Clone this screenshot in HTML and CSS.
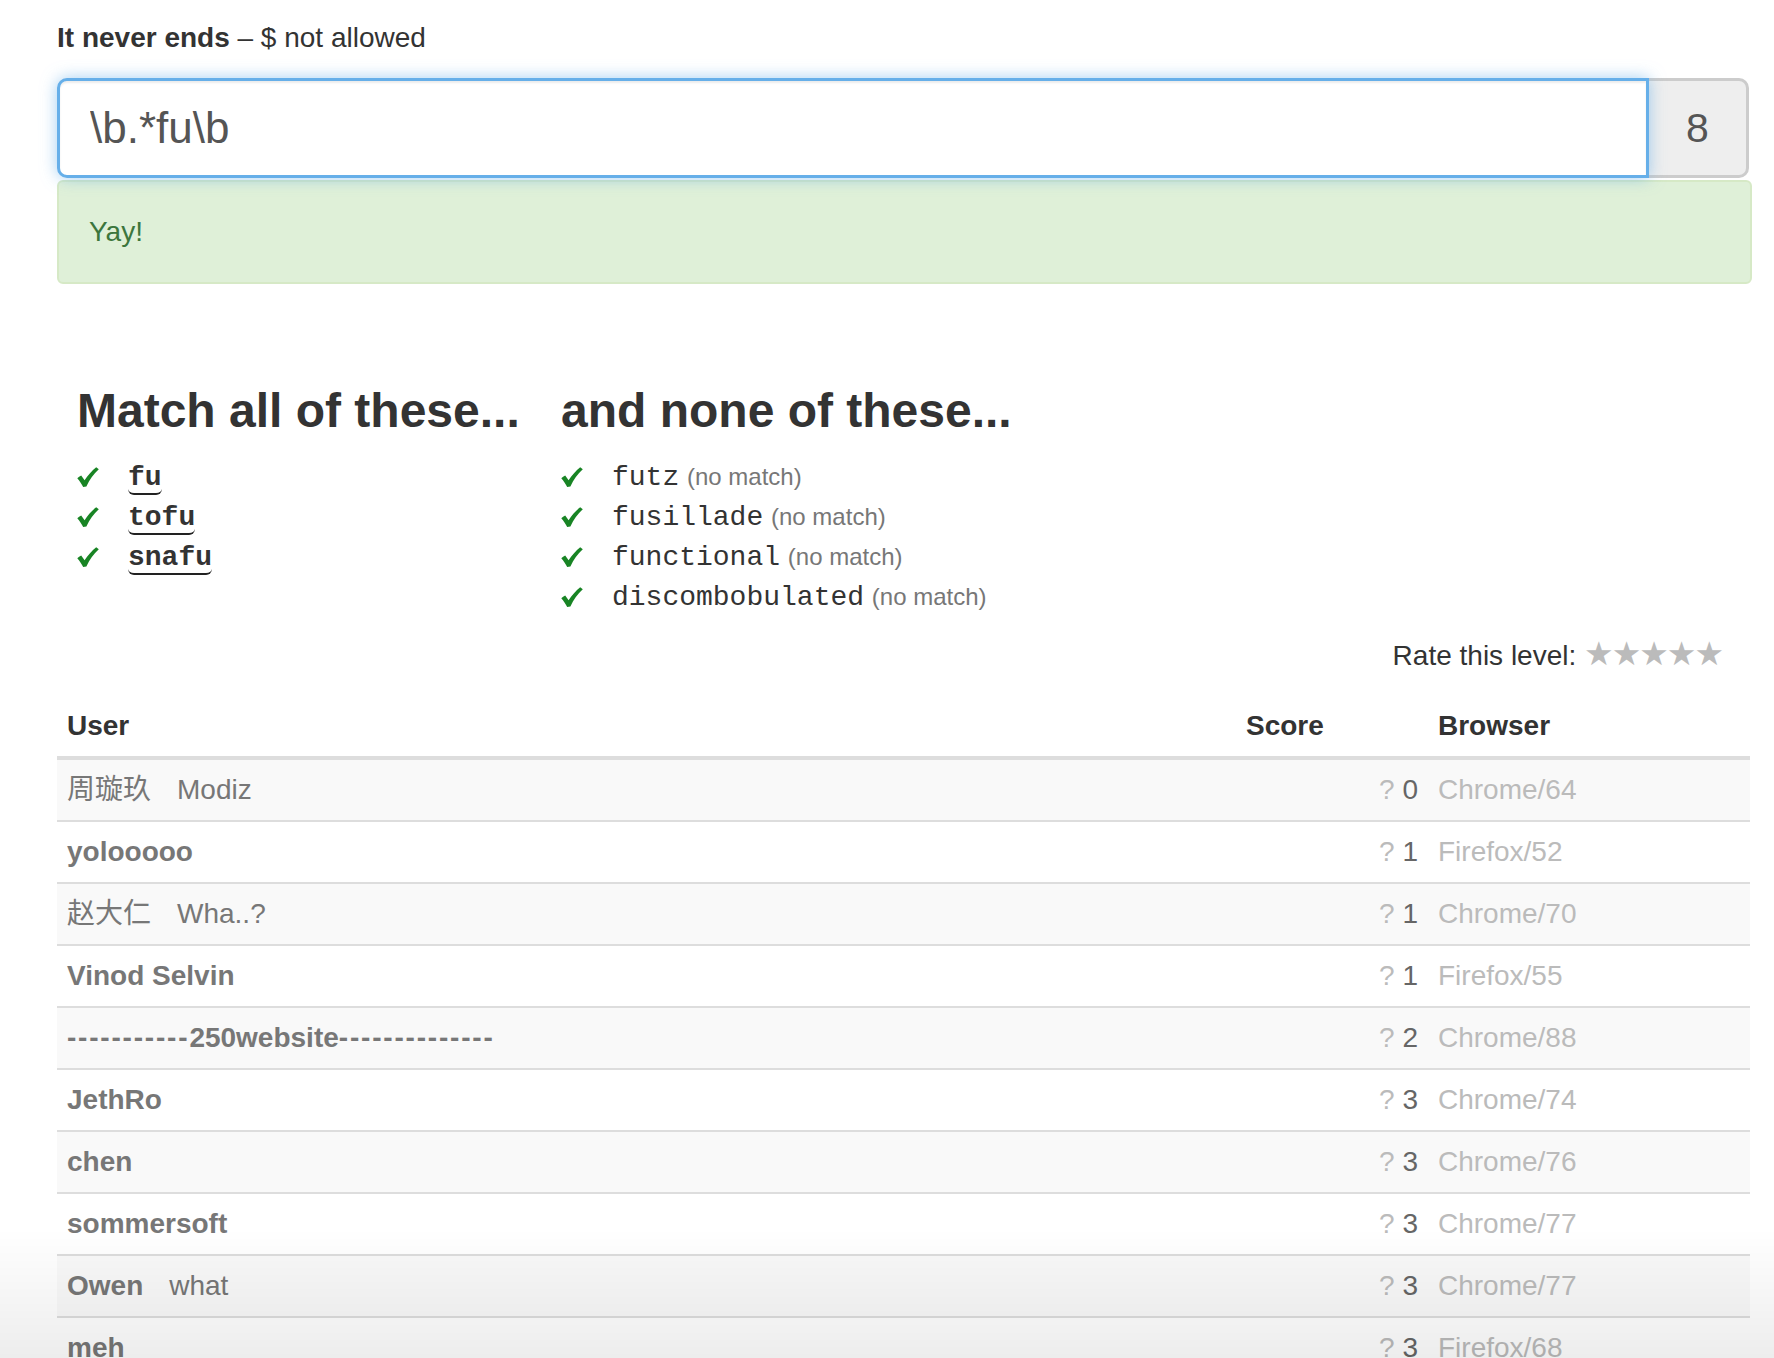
FILE: index.html
```html
<!DOCTYPE html>
<html lang="en">
<head>
<meta charset="utf-8">
<title>Regex Crossword – It never ends</title>
<link rel="stylesheet" href="styles.css">
</head>
<body>
<div class="page">
  <form class="entry">
    <label class="prompt"><strong>It never ends</strong> – $ not allowed</label>
    <div class="input-group">
      <input class="regex" type="text" value="\b.*fu\b">
      <span class="addon">8</span>
    </div>
    <div class="alert">Yay!</div>
  </form>

  <div class="tests">
    <div class="col col-match">
      <h3>Match all of these...</h3>
      <ul class="cases">
        <li><svg class="check" viewBox="0 0 22 20" width="22" height="20"><path d="M0.3 11.2 C1.4 10.2 2.7 9.2 4.2 8.6 L7.6 13.2 C11 8.2 14.8 3.6 19.2 0.2 L21.8 2.2 C16.6 6.8 12.6 12.6 9.4 19.4 L6.2 19.9 C4.6 16.8 2.6 13.8 0.3 11.2 Z"/></svg><span class="word hit">fu</span></li>
        <li><svg class="check" viewBox="0 0 22 20" width="22" height="20"><path d="M0.3 11.2 C1.4 10.2 2.7 9.2 4.2 8.6 L7.6 13.2 C11 8.2 14.8 3.6 19.2 0.2 L21.8 2.2 C16.6 6.8 12.6 12.6 9.4 19.4 L6.2 19.9 C4.6 16.8 2.6 13.8 0.3 11.2 Z"/></svg><span class="word hit">tofu</span></li>
        <li><svg class="check" viewBox="0 0 22 20" width="22" height="20"><path d="M0.3 11.2 C1.4 10.2 2.7 9.2 4.2 8.6 L7.6 13.2 C11 8.2 14.8 3.6 19.2 0.2 L21.8 2.2 C16.6 6.8 12.6 12.6 9.4 19.4 L6.2 19.9 C4.6 16.8 2.6 13.8 0.3 11.2 Z"/></svg><span class="word hit">snafu</span></li>
      </ul>
    </div>
    <div class="col col-none">
      <h3>and none of these...</h3>
      <ul class="cases">
        <li><svg class="check" viewBox="0 0 22 20" width="22" height="20"><path d="M0.3 11.2 C1.4 10.2 2.7 9.2 4.2 8.6 L7.6 13.2 C11 8.2 14.8 3.6 19.2 0.2 L21.8 2.2 C16.6 6.8 12.6 12.6 9.4 19.4 L6.2 19.9 C4.6 16.8 2.6 13.8 0.3 11.2 Z"/></svg><span class="word">futz</span> <small class="nomatch">(no match)</small></li>
        <li><svg class="check" viewBox="0 0 22 20" width="22" height="20"><path d="M0.3 11.2 C1.4 10.2 2.7 9.2 4.2 8.6 L7.6 13.2 C11 8.2 14.8 3.6 19.2 0.2 L21.8 2.2 C16.6 6.8 12.6 12.6 9.4 19.4 L6.2 19.9 C4.6 16.8 2.6 13.8 0.3 11.2 Z"/></svg><span class="word">fusillade</span> <small class="nomatch">(no match)</small></li>
        <li><svg class="check" viewBox="0 0 22 20" width="22" height="20"><path d="M0.3 11.2 C1.4 10.2 2.7 9.2 4.2 8.6 L7.6 13.2 C11 8.2 14.8 3.6 19.2 0.2 L21.8 2.2 C16.6 6.8 12.6 12.6 9.4 19.4 L6.2 19.9 C4.6 16.8 2.6 13.8 0.3 11.2 Z"/></svg><span class="word">functional</span> <small class="nomatch">(no match)</small></li>
        <li><svg class="check" viewBox="0 0 22 20" width="22" height="20"><path d="M0.3 11.2 C1.4 10.2 2.7 9.2 4.2 8.6 L7.6 13.2 C11 8.2 14.8 3.6 19.2 0.2 L21.8 2.2 C16.6 6.8 12.6 12.6 9.4 19.4 L6.2 19.9 C4.6 16.8 2.6 13.8 0.3 11.2 Z"/></svg><span class="word">discombobulated</span> <small class="nomatch">(no match)</small></li>
      </ul>
    </div>
  </div>

  <div class="rate">Rate this level: <span class="stars"><span class="star">★</span><span class="star">★</span><span class="star">★</span><span class="star">★</span><span class="star">★</span></span></div>

  <table class="scores">
    <colgroup>
      <col class="c-user">
      <col class="c-score">
      <col class="c-browser">
    </colgroup>
    <thead>
      <tr><th>User</th><th>Score</th><th>Browser</th></tr>
    </thead>
    <tbody>
      <tr><td><span class="name cjk">周璇玖</span><span class="note">Modiz</span></td><td class="score"><span class="q">?</span> <span class="num">0</span></td><td class="browser">Chrome/64</td></tr>
      <tr><td><span class="name">yolooooo</span></td><td class="score"><span class="q">?</span> <span class="num">1</span></td><td class="browser">Firefox/52</td></tr>
      <tr><td><span class="name cjk">赵大仁</span><span class="note">Wha..?</span></td><td class="score"><span class="q">?</span> <span class="num">1</span></td><td class="browser">Chrome/70</td></tr>
      <tr><td><span class="name">Vinod Selvin</span></td><td class="score"><span class="q">?</span> <span class="num">1</span></td><td class="browser">Firefox/55</td></tr>
      <tr><td><span class="name"><span class="dashes">-----------</span>250website<span class="dashes">--------------</span></span></td><td class="score"><span class="q">?</span> <span class="num">2</span></td><td class="browser">Chrome/88</td></tr>
      <tr><td><span class="name">JethRo</span></td><td class="score"><span class="q">?</span> <span class="num">3</span></td><td class="browser">Chrome/74</td></tr>
      <tr><td><span class="name">chen</span></td><td class="score"><span class="q">?</span> <span class="num">3</span></td><td class="browser">Chrome/76</td></tr>
      <tr><td><span class="name">sommersoft</span></td><td class="score"><span class="q">?</span> <span class="num">3</span></td><td class="browser">Chrome/77</td></tr>
      <tr><td><span class="name">Owen</span><span class="note">what</span></td><td class="score"><span class="q">?</span> <span class="num">3</span></td><td class="browser">Chrome/77</td></tr>
      <tr><td><span class="name">meh</span></td><td class="score"><span class="q">?</span> <span class="num">3</span></td><td class="browser">Firefox/68</td></tr>
    </tbody>
  </table>
</div>
<div class="fade"></div>
</body>
</html>
```

FILE: styles.css
```css
* { box-sizing: border-box; }

html, body {
  margin: 0;
  height: 100%;
  overflow: hidden;
  background: #fff;
}

body {
  font-family: "Liberation Sans", Arial, Helvetica, sans-serif;
  font-size: 28px;
  line-height: 40px;
  color: #333;
}

.page {
  padding: 18px 22px 0 57px;
}

/* ---------- entry ---------- */
.prompt {
  display: block;
  margin-bottom: 20px;
  font-weight: normal;
}
.prompt strong { font-weight: bold; }

.input-group {
  display: flex;
  height: 100px;
  margin-right: 3px;
}

.regex {
  flex: 1;
  min-width: 0;
  height: 100%;
  margin: 0;
  padding: 0 30px;
  border: 3px solid #66afe9;
  border-radius: 10px 0 0 10px;
  background: #fff;
  color: #555;
  font-family: "Liberation Sans", Arial, sans-serif;
  font-size: 44px;
  outline: none;
  box-shadow: inset 0 2px 2px rgba(0, 0, 0, 0.075), 0 0 16px rgba(102, 175, 233, 0.6);
  position: relative;
  z-index: 2;
}

.addon {
  width: 100px;
  display: flex;
  align-items: center;
  justify-content: center;
  background: #eee;
  border: 3px solid #ccc;
  border-left: 0;
  border-radius: 0 10px 10px 0;
  color: #555;
  font-size: 41px;
}

.alert {
  margin-top: 2px;
  padding: 30px;
  border: 2px solid #d6e9c6;
  border-radius: 6px;
  background: #dff0d8;
  color: #3c763d;
}

/* ---------- tests ---------- */
.tests {
  display: flex;
  margin-top: 101px;
  padding-left: 20px;
}

.col-match { width: 484px; }

.tests h3 {
  margin: 0 0 18px;
  font-size: 48px;
  line-height: 52.8px;
  font-weight: bold;
  color: #333;
}

.cases {
  list-style: none;
  margin: 0;
  padding: 0;
}

.cases li {
  height: 40px;
  white-space: nowrap;
}

.check {
  fill: #188424;
  margin-right: 29px;
  vertical-align: -2px;
}

.word {
  font-family: "Liberation Mono", "Courier New", monospace;
  color: #333;
  line-height: 1;
}

.hit {
  font-weight: bold;
  border-bottom: 2px solid #222;
  border-radius: 6px;
}

.nomatch {
  font-size: 24px;
  color: #777;
  line-height: 1;
}

/* ---------- rating ---------- */
.rate {
  margin-top: 20px;
  text-align: right;
  padding-right: 30px;
  height: 40px;
}

.stars {
  color: #bbb;
  font-family: "DejaVu Sans", sans-serif;
  font-size: 33px;
  line-height: 1;
}

.star {
  display: inline-block;
  width: 27.6px;
  text-align: center;
}

/* ---------- scores table ---------- */
.scores {
  margin-top: 20px;
  width: calc(100% - 2px);
  border-collapse: collapse;
  table-layout: fixed;
}

.c-score { width: 192px; }
.c-browser { width: 322px; }

.scores th {
  text-align: left;
  padding: 10px;
  border-bottom: 4px solid #ddd;
  font-weight: bold;
  color: #333;
}

.scores td {
  padding: 10px;
  border-top: 2px solid #ddd;
  white-space: nowrap;
}

.scores tbody tr:nth-child(odd) td { background: #f9f9f9; }

.name {
  font-weight: bold;
  color: #777;
}

.name.cjk {
  font-weight: normal;
  font-family: "Liberation Sans", "Noto Sans CJK SC", sans-serif;
}

.dashes { letter-spacing: 1.8px; }

.note {
  margin-left: 26px;
  color: #777;
}

.score { text-align: right; }
.q { color: #bbb; }
.num { color: #666; }

.browser { color: #bbb; }

/* bottom fade of the window */
.fade {
  position: fixed;
  left: 0;
  right: 0;
  bottom: 0;
  height: 130px;
  background: linear-gradient(rgba(0, 0, 0, 0), rgba(0, 0, 0, 0.07));
  pointer-events: none;
}
```
